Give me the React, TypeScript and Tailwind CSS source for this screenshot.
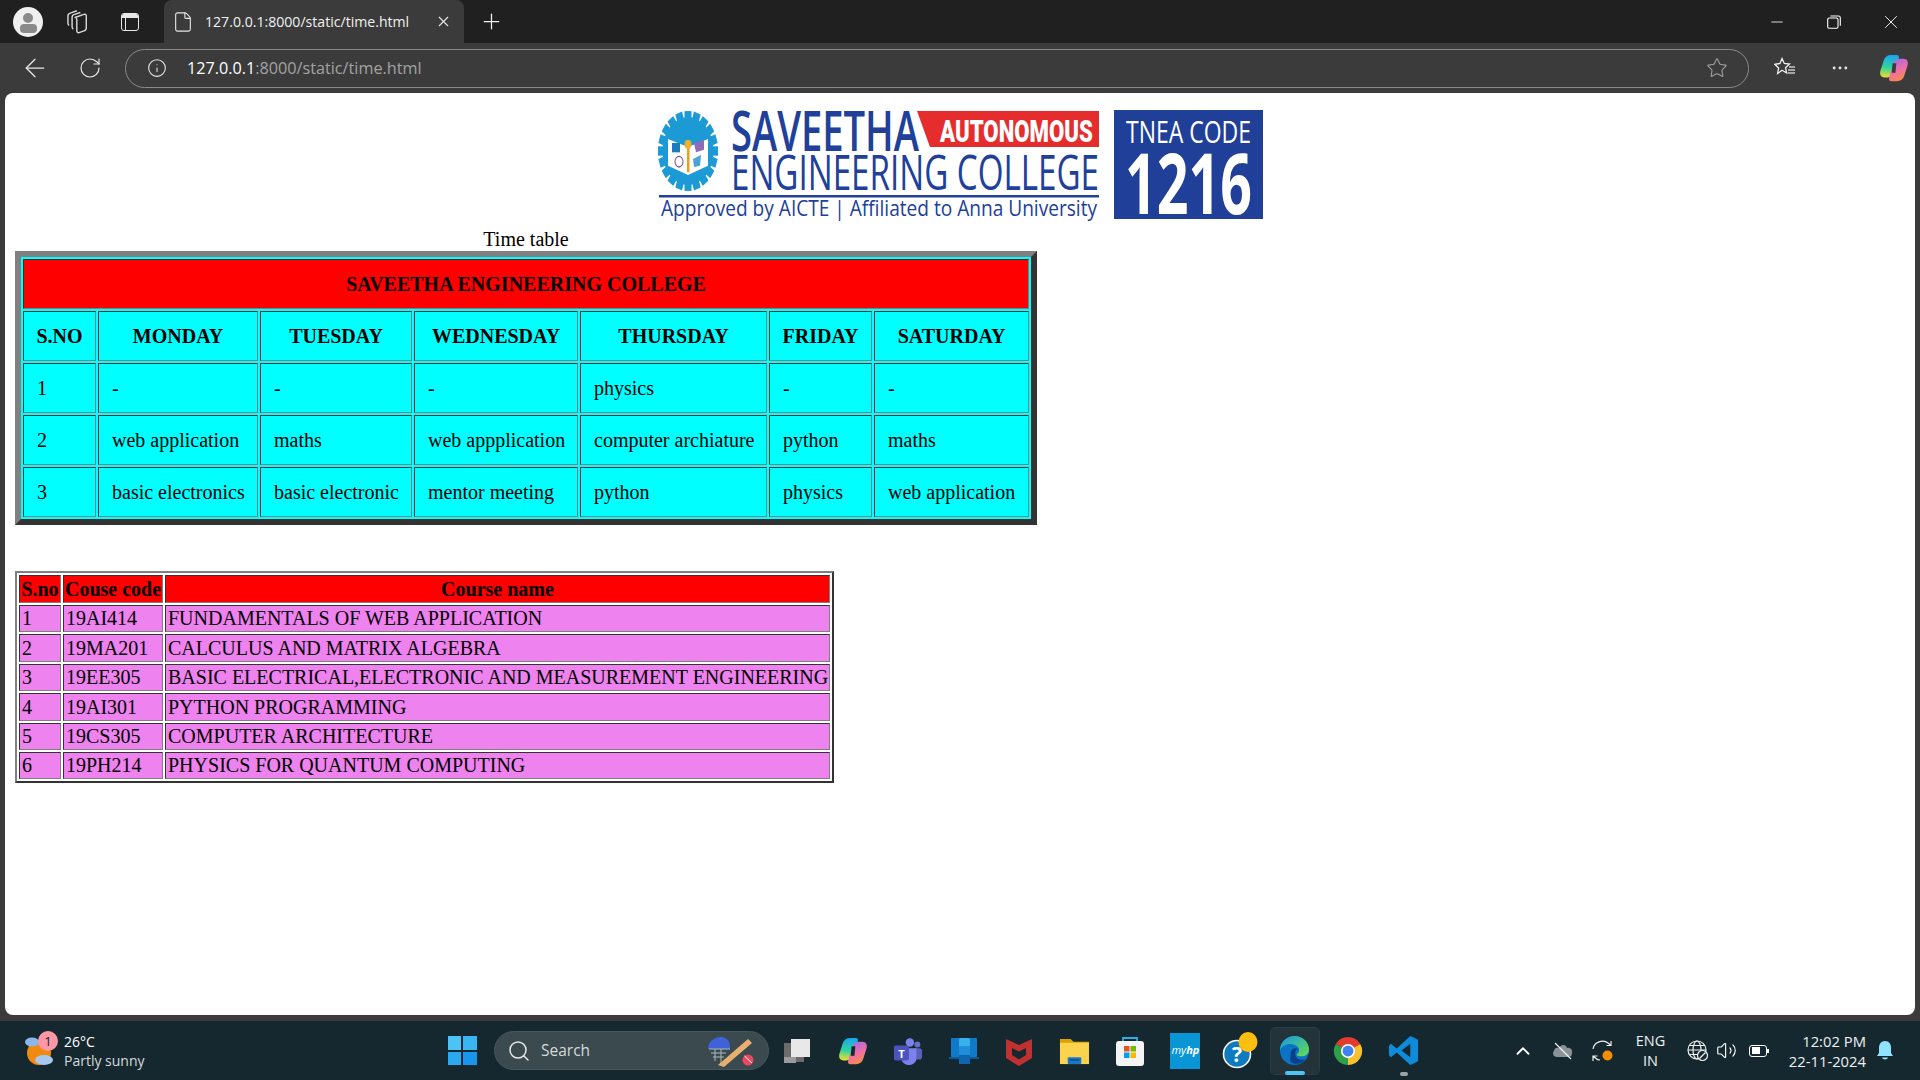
import { ArrowLeft, RotateCw, Info, Star, X, Plus, Minus, MoreHorizontal, Search, ChevronUp, Volume2, File } from "lucide-react";

const days = ["S.NO", "MONDAY", "TUESDAY", "WEDNESDAY", "THURSDAY", "FRIDAY", "SATURDAY"];
const dayWidths = ["w-[73px]", "w-[160px]", "w-[152px]", "w-[164px]", "w-[187px]", "w-[103px]", "w-[155px]"];
const slots = [
  ["1", "-", "-", "-", "physics", "-", "-"],
  ["2", "web application", "maths", "web appplication", "computer archiature", "python", "maths"],
  ["3", "basic electronics", "basic electronic", "mentor meeting", "python", "physics", "web application"],
];

const courses = [
  { no: "1", code: "19AI414", name: "FUNDAMENTALS OF WEB APPLICATION", h: "h-[27px]" },
  { no: "2", code: "19MA201", name: "CALCULUS AND MATRIX ALGEBRA", h: "h-[28px]" },
  { no: "3", code: "19EE305", name: "BASIC ELECTRICAL,ELECTRONIC AND MEASUREMENT ENGINEERING", h: "h-[27px]" },
  { no: "4", code: "19AI301", name: "PYTHON PROGRAMMING", h: "h-[28px]" },
  { no: "5", code: "19CS305", name: "COMPUTER ARCHITECTURE", h: "h-[27px]" },
  { no: "6", code: "19PH214", name: "PHYSICS FOR QUANTUM COMPUTING", h: "h-[27px]" },
];

const cellBorder = "border border-t-[#333333] border-l-[#333333] border-r-[#808080] border-b-[#808080]";

function Logo() {
  const teeth = Array.from({ length: 20 }, (_, i) => i * 18);
  return (
    <svg width="605" height="110" viewBox="0 0 605 110" className="block overflow-visible">
      <g transform="translate(30 41) scale(1 1.33)">
        {teeth.map((a) => (
          <rect key={a} x="-3.5" y="-30" width="7" height="8" fill="#1b9ad6" transform={`rotate(${a})`} />
        ))}
        <circle r="25.5" fill="#1b9ad6" />
        <path d="M-20 -9 L0 -3 L20 -9 L20 11 L0 18 L-20 11 Z" fill="#ffffff" />
        <rect x="-16" y="-6" width="8" height="7" fill="#1b7ac0" />
        <path d="M6 -6 L16 -8 L16 -1 L8 1 Z" fill="#8d6bb5" />
        <circle cx="-9" cy="8" r="4" fill="none" stroke="#7a4fa0" strokeWidth="1" />
        <path d="M5 6 L13 3 L12 11 L6 12 Z" fill="#4aa3d8" />
        <rect x="-1" y="-4" width="2.5" height="20" fill="#e8a020" />
        <circle cy="-5" r="3.5" fill="#f0b030" />
      </g>
      <text x="73" y="41" textLength="188" lengthAdjust="spacingAndGlyphs" fontFamily="'Open Sans', sans-serif" fontWeight="600" fontSize="56" fill="#20409a">SAVEETHA</text>
      <path d="M259 1 H441 V37 H272 Z" fill="#e52d2d" />
      <text x="282" y="32" textLength="153" lengthAdjust="spacingAndGlyphs" fontFamily="'Roboto', sans-serif" fontWeight="900" fontSize="32" fill="#ffffff">AUTONOMOUS</text>
      <text x="73" y="80" textLength="368" lengthAdjust="spacingAndGlyphs" fontFamily="'Open Sans', sans-serif" fontWeight="500" fontSize="50" fill="#20409a">ENGINEERING COLLEGE</text>
      <rect x="1" y="85" width="440" height="2.5" fill="#20409a" />
      <text x="3" y="106" textLength="436" lengthAdjust="spacingAndGlyphs" fontFamily="'Open Sans', sans-serif" fontSize="21" fill="#20409a">Approved by AICTE  |  Affiliated to Anna University</text>
      <rect x="456" y="0" width="149" height="109" fill="#1f3f98" />
      <text x="468" y="33" textLength="125" lengthAdjust="spacingAndGlyphs" fontFamily="'Open Sans', sans-serif" fontSize="31" fill="#ffffff">TNEA CODE</text>
      <text x="467" y="104" textLength="127" lengthAdjust="spacingAndGlyphs" fontFamily="'Open Sans', sans-serif" fontWeight="700" fontSize="85" fill="#ffffff">1216</text>
    </svg>
  );
}

function Timetable() {
  return (
    <table className="table-fixed w-[1022px] border-separate border-spacing-[2px] bg-[#00ffff] border-[6px] border-t-[#808080] border-l-[#808080] border-r-[#333333] border-b-[#333333] leading-[23px]">
      <caption className="h-[23px]">Time table</caption>
      <colgroup>
        {dayWidths.map((w) => (
          <col key={w} className={w} />
        ))}
      </colgroup>
      <thead>
        <tr>
          <th colSpan={7} className={`h-[50px] bg-[#ff0000] font-bold ${cellBorder}`}>SAVEETHA ENGINEERING COLLEGE</th>
        </tr>
        <tr>
          {days.map((d) => (
            <th key={d} className={`h-[50px] font-bold ${cellBorder}`}>{d}</th>
          ))}
        </tr>
      </thead>
      <tbody>
        {slots.map((row) => (
          <tr key={row[0]}>
            {row.map((c, i) => (
              <td key={i} className={`h-[50px] pl-[13px] whitespace-nowrap ${cellBorder}`}>{c}</td>
            ))}
          </tr>
        ))}
      </tbody>
    </table>
  );
}

function CourseTable() {
  return (
    <table className="table-fixed mt-[46px] w-[819px] border-separate border-spacing-[2px] bg-white border-2 border-t-[#808080] border-l-[#808080] border-r-[#333333] border-b-[#333333] leading-[23px]">
      <thead>
        <tr className="bg-[#ff0000]">
          <th className={`w-[42px] h-[28px] p-0 ${cellBorder}`}>S.no</th>
          <th className={`w-[100px] h-[28px] p-0 whitespace-nowrap ${cellBorder}`}>Couse code</th>
          <th className={`h-[28px] p-0 ${cellBorder}`}>Course name</th>
        </tr>
      </thead>
      <tbody>
        {courses.map((c) => (
          <tr key={c.no} className="bg-[#ee82ee]">
            <td className={`${c.h} pl-[2px] ${cellBorder}`}>{c.no}</td>
            <td className={`${c.h} pl-[2px] ${cellBorder}`}>{c.code}</td>
            <td className={`${c.h} pl-[2px] whitespace-nowrap ${cellBorder}`}>{c.name}</td>
          </tr>
        ))}
      </tbody>
    </table>
  );
}

function CopilotIcon({ size = 30, id, gap }: { size?: number; id: string; gap: string }) {
  const blob = "M13 2 H19 C22 2 21.5 5 20.5 8 L16.5 21 C15.5 24 12 26 9 26 H6 C2 26 0.5 23 1.5 19 L5 8 C6 4 9 2 13 2 Z";
  return (
    <svg width={size} height={size} viewBox="0 0 32 32">
      <defs>
        <linearGradient id={`${id}a`} x1="0.4" y1="0" x2="0.3" y2="1">
          <stop offset="0" stopColor="#1aa5f0" />
          <stop offset="0.55" stopColor="#2fd3a0" />
          <stop offset="1" stopColor="#f0dc30" />
        </linearGradient>
        <linearGradient id={`${id}b`} x1="0.3" y1="0" x2="0.7" y2="1">
          <stop offset="0" stopColor="#f89038" />
          <stop offset="0.45" stopColor="#f070a0" />
          <stop offset="1" stopColor="#a868e8" />
        </linearGradient>
      </defs>
      <path d={blob} fill={`url(#${id}a)`} />
      <path d={blob} fill={`url(#${id}b)`} transform="rotate(180 16 16)" />
      <path d="M14.5 11 H18.5 L17.5 21 H13.5 Z" fill={gap} />
    </svg>
  );
}

function EdgeIcon() {
  return (
    <svg width="31" height="31" viewBox="0 0 32 32">
      <defs>
        <linearGradient id="edgeG" x1="0.2" y1="0" x2="1" y2="0.8">
          <stop offset="0" stopColor="#1a9fd8" />
          <stop offset="1" stopColor="#5fd85a" />
        </linearGradient>
      </defs>
      <circle cx="16" cy="16" r="15" fill="#0c72c4" />
      <path d="M1 16 C1 6 9 1 16 1 C25 1 31 8 31 15 C31 20 27 22 23 22 C20 22 18 21 18 20 C22 18 22 12 16 10 C9 8 3 11 1 16 Z" fill="url(#edgeG)" />
      <path d="M12 20 C12 14 17 12 20 15 C18 15 16 17 17 21 C18 25 23 27 27 25 C23 31 15 31 12 27 C11 25 12 22 12 20 Z" fill="#0a3f8a" />
    </svg>
  );
}

function ChromeIcon() {
  return (
    <svg width="30" height="30" viewBox="0 0 32 32">
      <path d="M16 16 L3 8.5 A15 15 0 0 1 29 8.5 Z" fill="#e33b2e" />
      <path d="M16 16 L29 8.5 A15 15 0 0 1 16 31 Z" fill="#fbc02d" />
      <path d="M16 16 L16 31 A15 15 0 0 1 3 8.5 Z" fill="#2e9e48" />
      <circle cx="16" cy="16" r="7.5" fill="#ffffff" />
      <circle cx="16" cy="16" r="5.8" fill="#3f82f0" />
    </svg>
  );
}

function VsCodeIcon() {
  return (
    <svg width="31" height="31" viewBox="0 0 32 32">
      <path d="M23 1 L31 5 V27 L23 31 L9 18 L3 23 L1 21 V11 L3 9 L9 14 Z M23 9 L14 16 L23 23 Z" fill="#0f8bdc" fillRule="evenodd" />
    </svg>
  );
}

function TeamsIcon() {
  return (
    <svg width="30" height="30" viewBox="0 0 32 32">
      <circle cx="26" cy="9" r="3.2" fill="#6a70c8" />
      <circle cx="18" cy="7" r="4.5" fill="#7b83eb" />
      <rect x="21" y="13" width="10" height="12" rx="3" fill="#5a60b8" />
      <path d="M9 13 H25 V24 C25 28 21 31 17 31 C13 31 9 28 9 24 Z" fill="#7b83eb" />
      <rect x="1" y="10" width="16" height="16" rx="2" fill="#4b53bc" />
      <text x="9" y="23" textAnchor="middle" fontFamily="'Open Sans', sans-serif" fontWeight="700" fontSize="12" fill="#ffffff">T</text>
    </svg>
  );
}

function PhoneLinkIcon() {
  return (
    <svg width="32" height="32" viewBox="0 0 32 32">
      <rect x="3" y="3" width="26" height="19" rx="1" fill="#0f7bc8" />
      <rect x="1" y="22" width="30" height="2" fill="#0b5a98" />
      <rect x="11" y="3" width="11" height="26" rx="1.5" fill="#38b0ec" />
      <rect x="11" y="20" width="11" height="9" fill="#0f66b0" />
      <rect x="11" y="11" width="11" height="9" fill="#1e8fd8" />
    </svg>
  );
}

function McAfeeIcon() {
  return (
    <svg width="28" height="30" viewBox="0 0 28 30">
      <path d="M1 3 L14 9 L27 3 V22 L14 30 L1 22 Z M7 12 V19 L14 23.5 L21 19 V12 L14 15.5 Z" fill="#c0302e" fillRule="evenodd" />
    </svg>
  );
}

function FolderIcon() {
  return (
    <svg width="31" height="31" viewBox="0 0 32 32">
      <path d="M1 4 H12 L15 7 H31 V12 H1 Z" fill="#dca000" />
      <rect x="1" y="8" width="30" height="22" fill="#fcd34d" />
      <rect x="9" y="23" width="14" height="7" rx="1" fill="#1a78c8" />
      <rect x="11" y="25" width="10" height="1.6" fill="#0c4f90" />
    </svg>
  );
}

function StoreIcon() {
  return (
    <svg width="30" height="32" viewBox="0 0 30 32">
      <path d="M8 7 V3 H22 V7" fill="none" stroke="#25b0ea" strokeWidth="1.8" />
      <rect x="1" y="6" width="28" height="25" rx="3" fill="#f4f4f4" />
      <rect x="9" y="11" width="5.5" height="5.5" fill="#e8532c" />
      <rect x="15.5" y="11" width="5.5" height="5.5" fill="#7ab800" />
      <rect x="9" y="17.5" width="5.5" height="5.5" fill="#00a2ed" />
      <rect x="15.5" y="17.5" width="5.5" height="5.5" fill="#fdb900" />
    </svg>
  );
}

function MyHpIcon() {
  return (
    <div className="w-[30px] h-[36px] bg-[#0a96d6] flex items-center justify-center">
      <span className="text-[11px] italic text-white font-['Open_Sans',sans-serif]">my<b>hp</b></span>
    </div>
  );
}

function HelpIcon() {
  return (
    <svg width="38" height="38" viewBox="0 0 38 38">
      <circle cx="15" cy="22" r="13.5" fill="#0f7bbf" stroke="#ffffff" strokeWidth="1.6" />
      <text x="15" y="30" textAnchor="middle" fontFamily="'Open Sans', sans-serif" fontWeight="700" fontSize="21" fill="#ffffff">?</text>
      <ellipse cx="26" cy="10" rx="9.5" ry="10" fill="#fdbf0f" />
    </svg>
  );
}

function TasksIcon() {
  return (
    <svg width="30" height="30" viewBox="0 0 30 30">
      <rect x="1" y="7" width="20" height="19" fill="#6c6c6c" />
      <rect x="8" y="3" width="19" height="18" fill="#e8e8e8" />
      <rect x="1" y="21" width="12" height="6" fill="#9a9a9a" />
    </svg>
  );
}

function WeatherIcon() {
  return (
    <svg width="34" height="36" viewBox="0 0 34 36">
      <circle cx="15" cy="20" r="12" fill="#f08a10" />
      <ellipse cx="8" cy="9" rx="7" ry="4.5" fill="#8ab8ec" />
      <ellipse cx="20" cy="27" rx="9" ry="5" fill="#a8c8f0" />
    </svg>
  );
}

function WindowsLogo() {
  return (
    <div className="grid grid-cols-2 gap-[2px] w-[29px] h-[29px]">
      <div className="bg-[#4cc2f5]" />
      <div className="bg-[#3bb5f2]" />
      <div className="bg-[#2aa8f0]" />
      <div className="bg-[#1a95ec]" />
    </div>
  );
}

function SearchArt() {
  return (
    <svg width="50" height="32" viewBox="0 0 50 32">
      <path d="M2 14 C2 5 10 2 15 2 C21 2 25 7 24 14 Z" fill="#3f62d8" />
      <path d="M3 14 H24 M5 18 H20 M7 22 H18 M9 14 V26 M15 14 V28" stroke="#aeb8bc" strokeWidth="1" fill="none" />
      <path d="M12 30 L42 4 L46 8 L18 32 Z" fill="#e8b070" />
      <circle cx="42" cy="25" r="5.5" fill="#e84860" />
      <path d="M38.5 21 L46 28" stroke="#ffffff" strokeWidth="1" />
    </svg>
  );
}

function TaskSlot({ children, indicator }: { children: React.ReactNode; indicator?: string }) {
  return (
    <div className="relative w-[55.4px] h-[48px] flex items-center justify-center">
      {children}
      {indicator && <div className={`absolute bottom-[-1px] h-[4px] rounded-full ${indicator}`} />}
    </div>
  );
}

function TabBar() {
  return (
    <div className="h-[43px] bg-[#202020] flex items-center text-white shrink-0">
      <div className="w-[56px] flex justify-center">
        <div className="w-[30px] h-[30px] rounded-full bg-[#f0f0f0] relative overflow-hidden flex flex-col items-center pt-[6px]">
          <div className="w-[10px] h-[10px] rounded-full bg-[#8a8a8a]" />
          <div className="w-[17px] h-[9px] rounded-[4px] bg-[#8a8a8a] mt-[1px]" />
        </div>
      </div>
      <div className="w-[44px] flex justify-center">
        <svg width="26" height="26" viewBox="0 0 22 22" fill="none" stroke="#d8d8d8" strokeWidth="1.2">
          <path d="M9 7 L16 4.5 Q18 4 18 6 V16 Q18 18 16 18.5 L12 20 Q10 20.5 10 18 V9 Q10 7.5 9 7 Z" />
          <path d="M7 17 Q6 16.5 6 15 V7 Q6 5 8 4.5 L13 3" />
          <path d="M3.5 14 Q2.5 13 2.5 12 V6 Q2.5 4 4.5 3.5 L10 1.5" />
        </svg>
      </div>
      <div className="w-[60px] flex justify-center">
        <div className="w-[18px] h-[18px] rounded-[3px] border-[1.5px] border-[#e8e8e8] overflow-hidden">
          <div className="h-[4px] bg-[#e8e8e8]" />
          <div className="w-[4px] h-[14px] border-r-[1.5px] border-[#e8e8e8]" />
        </div>
      </div>
      <div className="ml-[4px] w-[300px] h-[43px] bg-[#3b3b3b] rounded-t-[8px] flex items-center pl-[8px] pr-[12px]">
        <File size={22} strokeWidth={1.2} className="text-[#e8e8e8]" />
        <span className="ml-[11px] text-[14.1px] font-['Open_Sans',sans-serif] text-[#f0f0f0] whitespace-nowrap">127.0.0.1:8000/static/time.html</span>
        <X size={17} strokeWidth={1.6} className="ml-auto text-[#e8e8e8]" />
      </div>
      <div className="w-[54px] flex justify-center">
        <Plus size={25} strokeWidth={1.2} className="text-[#f0f0f0]" />
      </div>
      <div className="ml-auto flex items-center">
        <div className="w-[57px] flex justify-center"><Minus size={18} strokeWidth={1.1} /></div>
        <div className="w-[57px] flex justify-center">
          <svg width="14" height="14" viewBox="0 0 14 14" fill="none" stroke="#ffffff" strokeWidth="1.1">
            <rect x="0.7" y="3" width="10.3" height="10.3" rx="1.5" />
            <path d="M3.4 1 H11.5 Q13.3 1 13.3 2.8 V10.8" />
          </svg>
        </div>
        <div className="w-[58px] flex justify-center"><X size={22} strokeWidth={1} /></div>
      </div>
    </div>
  );
}

function Toolbar() {
  return (
    <div className="h-[50px] bg-[#3b3b3b] flex items-center text-[#e8e8e8] shrink-0">
      <div className="ml-[10px] w-[50px] flex justify-center"><ArrowLeft size={30} strokeWidth={1} /></div>
      <div className="w-[60px] flex justify-center"><RotateCw size={24} strokeWidth={1.2} /></div>
      <div className="ml-[5px] flex-1 h-[39px] rounded-full border border-[#8a8a8a] flex items-center pl-[21px] pr-[20px]">
        <Info size={20} strokeWidth={1.3} />
        <span className="ml-[20px] text-[16.2px] font-['Open_Sans',sans-serif] whitespace-nowrap text-[#a3a3a3]"><span className="text-white">127.0.0.1</span>:8000/static/time.html</span>
        <Star size={22} strokeWidth={1.2} className="ml-auto text-[#a0a0a0]" />
      </div>
      <div className="ml-[8px] w-[56px] flex justify-center">
        <svg width="22" height="22" viewBox="0 0 22 22" fill="none" stroke="#f0f0f0" strokeWidth="1.3">
          <path d="M8 1.5 L10.3 6.5 L15.5 7 L11.5 10.8 L12.7 16 L8 13.3 L3.6 16.5 L4.6 11 L0.8 7.3 L6 6.5 Z" />
          <path d="M15 10 H21 M14 13 H21 M14 16 H21" stroke="#c8c8c8" />
        </svg>
      </div>
      <div className="w-[54px] flex justify-center"><MoreHorizontal size={20} strokeWidth={1.5} /></div>
      <div className="w-[53px] flex justify-center"><CopilotIcon size={30} id="cpTop" gap="#3b3b3b" /></div>
    </div>
  );
}

function Taskbar() {
  return (
    <div className="h-[59px] bg-[#16282f] flex items-center text-white font-['Open_Sans',sans-serif] shrink-0">
      <div className="w-[434px] flex items-center pl-[24px]">
        <div className="relative w-[40px] flex">
          <WeatherIcon />
          <div className="absolute left-[14px] top-[-2px] w-[20px] h-[20px] rounded-full bg-[#ff98a6] text-[#222] text-[13px] leading-[20px] text-center">1</div>
        </div>
        <div className="leading-[19px] text-[14px]">
          <div>26°C</div>
          <div className="text-[#d5dadc]">Partly sunny</div>
        </div>
      </div>
      <div className="w-[56px] flex justify-center"><WindowsLogo /></div>
      <div className="ml-[4px] w-[275px] h-[39px] rounded-full bg-[#3a4a4f] border border-[#46565b] flex items-center pl-[12px] pr-[12px]">
        <Search size={24} strokeWidth={1.5} className="text-[#e8e8e8]" />
        <span className="ml-[10px] text-[15.5px] text-[#d5dadc]">Search</span>
        <div className="ml-auto flex"><SearchArt /></div>
      </div>
      <div className="ml-[1px] flex items-center">
        <TaskSlot><TasksIcon /></TaskSlot>
        <TaskSlot><CopilotIcon id="cpBar" gap="#16282f" /></TaskSlot>
        <TaskSlot><TeamsIcon /></TaskSlot>
        <TaskSlot><PhoneLinkIcon /></TaskSlot>
        <TaskSlot><McAfeeIcon /></TaskSlot>
        <TaskSlot><FolderIcon /></TaskSlot>
        <TaskSlot><StoreIcon /></TaskSlot>
        <TaskSlot><MyHpIcon /></TaskSlot>
        <TaskSlot><HelpIcon /></TaskSlot>
        <div className="relative w-[50px] h-[48px] mx-[1px] rounded-[5px] bg-[#223339] border border-[#2a3b41] flex items-center justify-center">
          <EdgeIcon />
          <div className="absolute bottom-[-1px] w-[20px] h-[4px] rounded-full bg-[#4fc3f7]" />
        </div>
        <TaskSlot><ChromeIcon /></TaskSlot>
        <TaskSlot indicator="w-[8px] bg-[#9aa5a8]"><VsCodeIcon /></TaskSlot>
      </div>
      <div className="ml-auto flex items-center">
        <div className="w-[40px] flex justify-center"><ChevronUp size={22} strokeWidth={2} /></div>
        <div className="w-[40px] flex justify-center">
          <svg width="22" height="18" viewBox="0 0 22 18">
            <path d="M5 15 C1 15 0 11 2 9 C2 6 5 5 7 6 C9 2 14 2 15 6 C18 5 21 8 20 11 C20 14 18 15 16 15 Z" fill="#8a9498" />
            <path d="M3 1 L19 17" stroke="#f0f0f0" strokeWidth="1.2" />
          </svg>
        </div>
        <div className="w-[40px] flex justify-center">
          <svg width="22" height="22" viewBox="0 0 22 22" fill="none" stroke="#f0f0f0" strokeWidth="1.2">
            <path d="M1 9 C2 2 11 -1 16 3 L19 5.5 M19 1 V5.5 H14.5" />
            <path d="M1 21 V16 H5.5 M1 16 L4 18.5 C5 19.5 6 20 8 20" />
            <circle cx="15.5" cy="15.5" r="5" fill="#f58f00" stroke="none" />
          </svg>
        </div>
        <div className="w-[56px] text-center text-[14.5px] leading-[20px] text-[#eef0f1]">
          <div>ENG</div>
          <div>IN</div>
        </div>
        <div className="ml-[2px] w-[34px] flex justify-center">
          <svg width="22" height="22" viewBox="0 0 22 22" fill="none" stroke="#f0f0f0" strokeWidth="1.2">
            <circle cx="10" cy="10" r="9" />
            <ellipse cx="10" cy="10" rx="4" ry="9" />
            <path d="M1 10 H19 M2.5 5.5 H17.5 M2.5 14.5 H17.5" />
            <circle cx="15.5" cy="15.5" r="5" fill="#16282f" />
            <path d="M12.5 18.5 L18.5 12.5" />
          </svg>
        </div>
        <div className="w-[24px] flex justify-center"><Volume2 size={21} strokeWidth={1.3} /></div>
        <div className="ml-[4.5px] w-[32px] flex justify-center">
          <div className="w-[18px] h-[12px] rounded-[3px] border border-white p-[1.5px]">
            <div className="w-[8px] h-full bg-white" />
          </div>
          <div className="w-[1.5px] h-[4px] bg-white self-center" />
        </div>
        <div className="ml-[6px] w-[86px] pr-[1px] text-right text-[14.8px] leading-[20px] text-[#eef0f1] whitespace-nowrap">
          <div>12:02 PM</div>
          <div>22-11-2024</div>
        </div>
        <div className="w-[53px] pl-[8px] flex justify-start">
          <svg width="20" height="22" viewBox="0 0 20 22">
            <path d="M10 1 C14 1 16 4 16 8 V13 L18 16 H2 L4 13 V8 C4 4 6 1 10 1 Z" fill="#8fe3ff" />
            <path d="M7 17.5 H13 C12.5 20 7.5 20 7 17.5 Z" fill="#8fe3ff" />
          </svg>
        </div>
      </div>
    </div>
  );
}

export default function App() {
  return (
    <div className="w-[1920px] h-[1080px] overflow-hidden flex flex-col bg-[#3b3b3b]">
      <TabBar />
      <Toolbar />
      <div className="mx-[5px] h-[922px] shrink-0 bg-white rounded-[8px] pl-[10px] pt-[17px] font-['Liberation_Serif',serif] text-[20px] text-black">
        <div className="flex justify-center pr-[10px]"><Logo /></div>
        <div className="mt-[8px]">
          <Timetable />
          <CourseTable />
        </div>
      </div>
      <div className="h-[6px] shrink-0" />
      <Taskbar />
    </div>
  );
}
